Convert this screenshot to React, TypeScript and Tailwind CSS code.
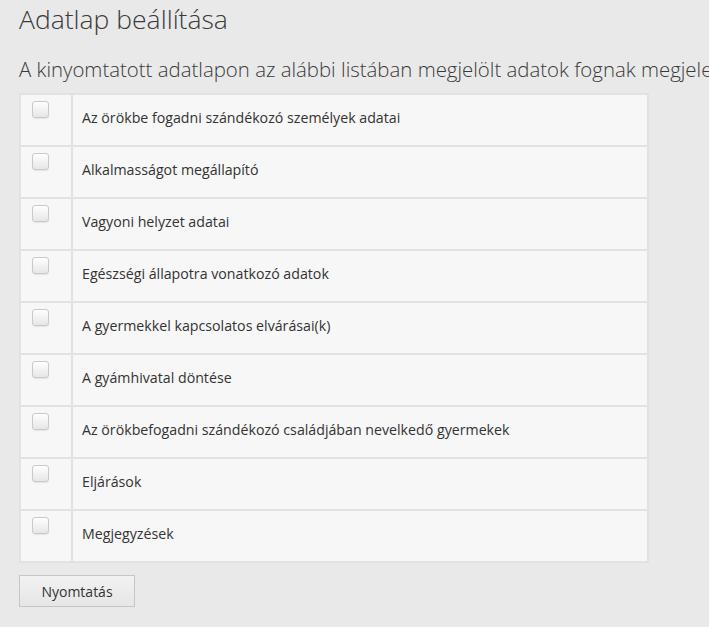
import React from "react";

const rows = [
  "Az örökbe fogadni szándékozó személyek adatai",
  "Alkalmasságot megállapító",
  "Vagyoni helyzet adatai",
  "Egészségi állapotra vonatkozó adatok",
  "A gyermekkel kapcsolatos elvárásai(k)",
  "A gyámhivatal döntése",
  "Az örökbefogadni szándékozó családjában nevelkedő gyermekek",
  "Eljárások",
  "Megjegyzések",
];

function Checkbox() {
  return (
    <span className="block h-[17px] w-[17px] rounded-[3px] border border-[#c9c9c9] bg-gradient-to-b from-white to-[#e6e6e6] shadow-[0_1px_1px_rgba(0,0,0,0.08)]" />
  );
}

export default function App() {
  return (
    <div className="w-[709px] overflow-hidden bg-white font-['Open_Sans',sans-serif]">
      <div className="h-[627px] bg-[#e9e9e9] pl-[19px]">
        {/* Page title */}
        <h1 className="whitespace-nowrap pt-[2px] text-[26.5px] font-light leading-[34px] text-[#3a3a3a]">
          Adatlap beállítása
        </h1>
        <p className="mt-[19px] whitespace-nowrap text-[20.4px] font-light leading-[28px] text-[#3a3a3a]">
          A kinyomtatott adatlapon az alábbi listában megjelölt adatok fognak megjelenni.
        </p>

        {/* Field list */}
        <table className="mt-[10px] w-[630px] border-collapse border-2 border-[#e2e2e2] bg-[#f7f7f7]">
          <tbody>
            {rows.map((label) => (
              <tr key={label} className="h-[52px]">
                <td className="w-[52px] border-2 border-[#e2e2e2] pl-[11px] pt-[6px] align-top">
                  <Checkbox />
                </td>
                <td className="border-2 border-[#e2e2e2] pl-[9px] pt-[13px] align-top text-[14.2px] leading-[20px] text-[#333]">
                  {label}
                </td>
              </tr>
            ))}
          </tbody>
        </table>

        <button className="mt-[12px] h-[32px] w-[116px] border border-[#c6c6c6] bg-gradient-to-b from-[#f2f2f2] to-[#e6e6e6] text-[14px] text-[#333]">
          Nyomtatás
        </button>
      </div>
    </div>
  );
}
